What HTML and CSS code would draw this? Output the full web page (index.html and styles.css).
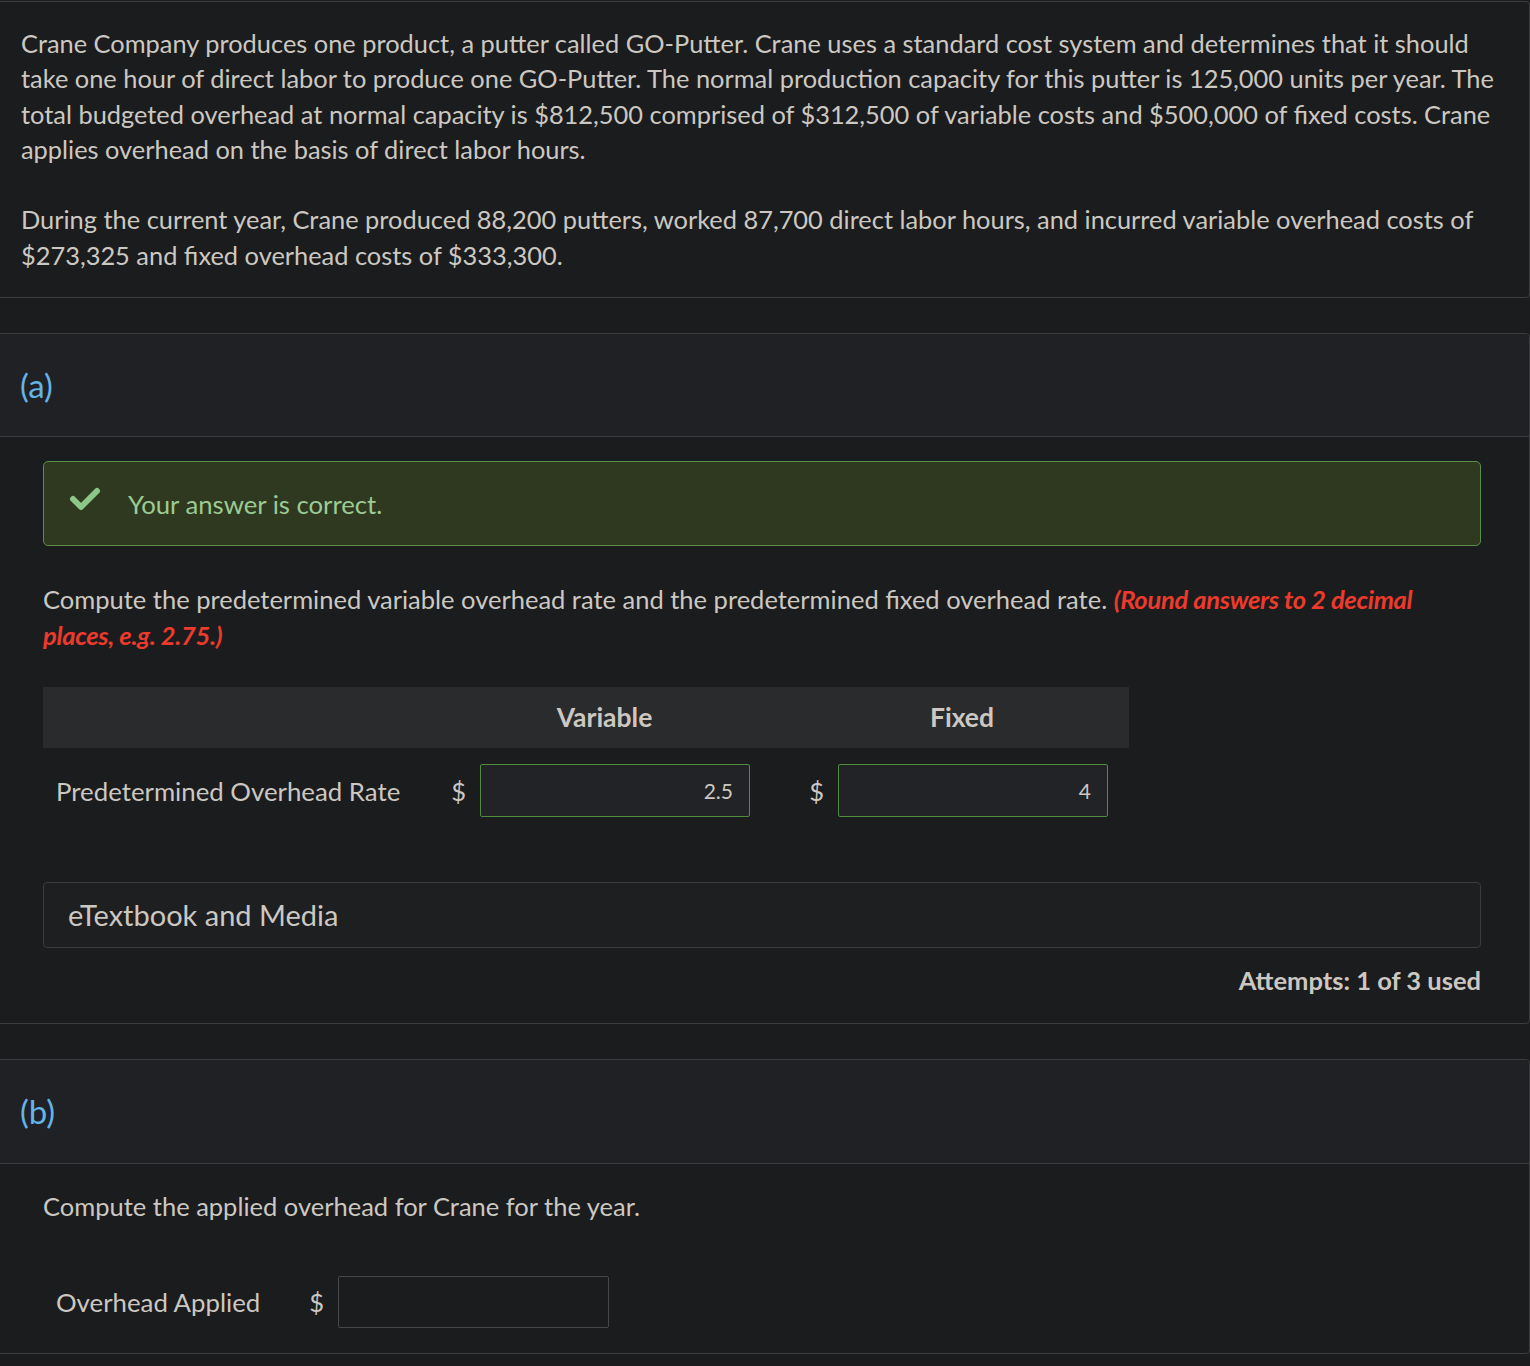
FILE: index.html
```html
<!DOCTYPE html>
<html lang="en">
<head>
<meta charset="utf-8">
<title>GO-Putter overhead</title>
<link rel="stylesheet" href="styles.css">
</head>
<body>
<div class="page">
  <section class="card intro">
    <p>Crane Company produces one product, a putter called GO-Putter. Crane uses a standard cost system and determines that it should take one hour of direct labor to produce one GO-Putter. The normal production capacity for this putter is 125,000 units per year. The total budgeted overhead at normal capacity is $812,500 comprised of $312,500 of variable costs and $500,000 of fixed costs. Crane applies overhead on the basis of direct labor hours.</p>
    <p>During the current year, Crane produced 88,200 putters, worked 87,700 direct labor hours, and incurred variable overhead costs of $273,325 and fixed overhead costs of $333,300.</p>
  </section>

  <section class="card part">
    <div class="part-head">(a)</div>
    <div class="part-body">
      <div class="alert-correct">
        <svg class="check" width="32" height="26" viewBox="0 0 32 26" aria-hidden="true"><polyline points="4,13 12,21 28,5" fill="none" stroke="#8cc688" stroke-width="6" stroke-linecap="round" stroke-linejoin="round"/></svg>
        <span>Your answer is correct.</span>
      </div>
      <p class="question">Compute the predetermined variable overhead rate and the predetermined fixed overhead rate. <em class="hint">(Round answers to 2 decimal places, e.g. 2.75.)</em></p>
      <div class="rate-table">
        <div class="th th-blank"></div>
        <div class="th th-var">Variable</div>
        <div class="th th-fix">Fixed</div>
        <div class="td label">Predetermined Overhead Rate</div>
        <div class="td cur">$</div>
        <div class="td"><div class="input correct">2.5</div></div>
        <div class="td"></div>
        <div class="td cur">$</div>
        <div class="td"><div class="input correct">4</div></div>
        <div class="td"></div>
      </div>
      <div class="media">eTextbook and Media</div>
      <div class="attempts">Attempts: 1 of 3 used</div>
    </div>
  </section>

  <section class="card part">
    <div class="part-head">(b)</div>
    <div class="part-body">
      <p class="question q-b">Compute the applied overhead for Crane for the year.</p>
      <div class="single-row">
        <div class="label">Overhead Applied</div>
        <div class="cur">$</div>
        <div class="input empty"></div>
      </div>
    </div>
  </section>
</div>
</body>
</html>
```

FILE: styles.css
```css
html, body {
  margin: 0;
  padding: 0;
  background: #1b1c1e;
  height: 1366px;
  overflow: hidden;
}
body {
  font-family: "Lato", "Liberation Sans", sans-serif;
  color: #ccc8c1;
  font-size: 25.5px;
  line-height: 36px;
}
.page {
  padding-top: 1px;
}
.card {
  margin-left: -1px;
  width: 1531px;
  box-sizing: border-box;
  border: 1px solid #3b3c3e;
  border-radius: 0 4px 4px 0;
  margin-bottom: 35px;
}
.intro {
  padding: 24px 30px 24px 21px;
  font-size: 25.4px;
  line-height: 35.3px;
}
.intro p {
  margin: 0;
}
.intro p + p {
  margin-top: 35.3px;
}
.part-head {
  background: #202124;
  border-bottom: 1px solid #3b3c3e;
  padding: 33px 0 33px 20px;
  font-size: 33px;
  line-height: 36px;
  color: #63b4e8;
  border-radius: 0 4px 0 0;
}
.part-body {
  padding: 24px 48px 25px 43px;
}
.alert-correct {
  display: flex;
  align-items: center;
  background: #2e3920;
  border: 1px solid #5a8f48;
  border-radius: 5px;
  height: 85px;
  box-sizing: border-box;
  padding-left: 25px;
  color: #9ccb93;
  font-size: 25.7px;
  line-height: 36px;
}
.check {
  margin-right: 27px;
  margin-top: -10px;
}
.question {
  margin: 35px 0 0;
  line-height: 36px;
}
.hint {
  color: #ec3a2c;
  font-weight: 700;
  font-style: italic;
  letter-spacing: -0.3px;
}
.rate-table {
  margin-top: 34px;
  width: 1086px;
  display: grid;
  grid-template-columns: 371px 66px 270px 45px 43px 270px 21px;
}
.th {
  background: #2a2b2d;
  height: 61px;
  font-weight: 700;
  font-size: 26.5px;
  text-align: center;
  line-height: 61px;
}
.th-var { grid-column: 2 / 5; }
.th-fix { grid-column: 5 / 8; }
.td {
  padding: 16px 0;
  display: flex;
  align-items: center;
}
.label {
  padding-left: 13px;
  font-size: 25.8px;
}
.cur {
  justify-content: flex-end;
  padding-right: 14px;
}
.input {
  box-sizing: border-box;
  width: 270px;
  height: 53px;
  border: 1px solid #3e3f41;
  border-radius: 2px;
  background: #1b1c1e;
  text-align: right;
  padding-right: 16px;
  font-size: 21px;
  line-height: 51px;
  color: #ccc8c1;
}
.input.correct {
  border-color: #4f8c3e;
  background: #222326;
}
.input.empty {
  height: 52px;
  width: 271px;
  border-color: #46474a;
}
.media {
  margin-top: 49px;
  height: 66px;
  box-sizing: border-box;
  border: 1px solid #3b3c3e;
  border-radius: 4px;
  background: #1e1f21;
  padding-left: 24px;
  font-size: 29px;
  line-height: 64px;
}
.attempts {
  margin-top: 14px;
  text-align: right;
  font-weight: 700;
  line-height: 36px;
}
.part + .part .part-head {
  padding-bottom: 34px;
}
.q-b {
  margin-top: 0;
}
.single-row {
  margin-top: 52px;
  display: grid;
  grid-template-columns: 255px 40px 271px;
  align-items: center;
}
.single-row .cur {
  text-align: right;
}
```
